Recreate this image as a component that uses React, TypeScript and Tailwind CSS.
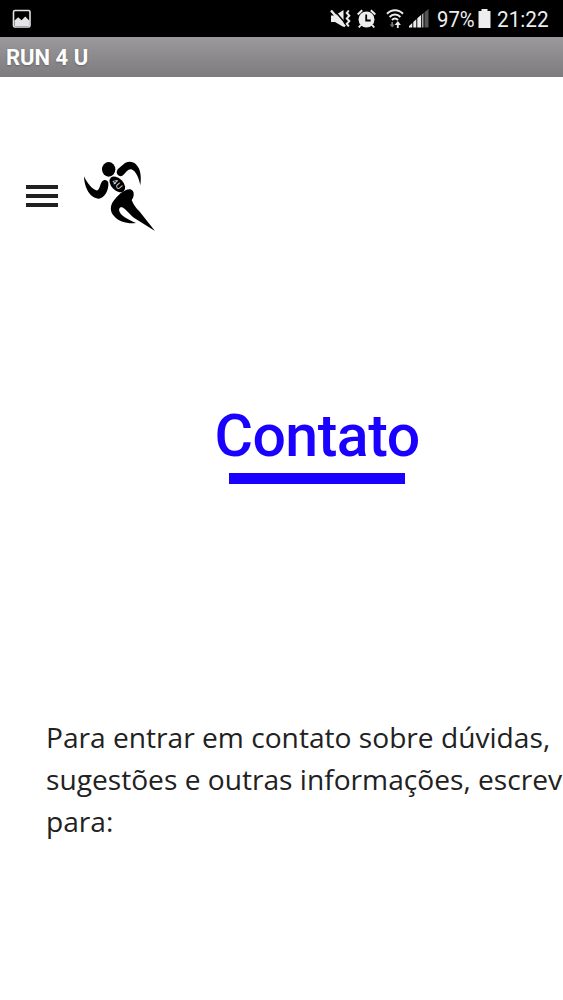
const StatusBar = () => {
  return (
    <div className="flex h-[37px] items-center bg-black pl-[12px] pt-[1px] text-[#ededf0]">
      <svg width="20" height="20" viewBox="0 0 20 20">
        <rect x="1.5" y="1.5" width="16.5" height="16.5" rx="1.5" fill="none" stroke="#e4e4e8" strokeWidth="1.6" />
        <path d="M2.5 17V11.5l3.7-3.2 3.4 2.9L13.2 7.500l4.300 4.200V17z" fill="#e4e4e8" />
      </svg>
      <div className="ml-[298px] flex items-center">
        <svg width="22" height="20" viewBox="0 0 22 20" fill="#ededf0">
          <path d="M1 6.500h4L13.500 1v17L5 13H1z" />
          <path d="M3.500.5L16 15" stroke="#000" strokeWidth="1.400" />
          <path d="M1 1.500L15 17.500" stroke="#ededf0" strokeWidth="2.400" />
          <path d="M18.800 1.500l-2 2.500 2.500 2.700-2.500 2.700 2.500 2.700-2.500 2.700 2 2.700" fill="none" stroke="#ededf0" strokeWidth="2" />
        </svg>
        <svg className="ml-[5px]" width="20" height="20" viewBox="0 0 20 20">
          <circle cx="9.500" cy="10.500" r="8" fill="#ededf0" />
          <path d="M.7 5.500L5.200 1.200M13.800 1.200L18.300 5.500" stroke="#ededf0" strokeWidth="2" />
          <path d="M3.800 16l-2 2.500M15.200 16l2 2.500" stroke="#ededf0" strokeWidth="2" />
          <path d="M9.200 5.500v6h4.500" fill="none" stroke="#000" strokeWidth="1.800" />
        </svg>
        <svg className="ml-[9px]" width="18" height="20" viewBox="0 0 18 20" fill="none">
          <path d="M1 4.700C5.500 0 12.500 0 17 4.700M3.600 8c3-3.200 7.800-3.200 10.800 0M6 11c1.800-1.800 4.200-1.800 6 0" stroke="#ededf0" strokeWidth="2" />
          <path d="M6.200 13v4" stroke="#777" strokeWidth="1.700" />
          <path d="M3.700 15.500h5l-2.500 3z" fill="#777" />
          <path d="M11.800 15v4" stroke="#ededf0" strokeWidth="1.800" />
          <path d="M8.700 16l3.100-4 3.100 4z" fill="#ededf0" />
        </svg>
        <svg className="ml-[5px]" width="20" height="20" viewBox="0 0 20 20" fill="#ededf0">
          <path d="M0 18.500v-1.500L3.300 14v4.500zM4.300 18.500v-5.500l3-2.700v8.200zM8.300 18.500V9.300L12 6v12.500z" />
          <path d="M12.800 18.500V5.500L14.500 4v14.500z" fill="#aaa" />
          <path d="M15.500 18.500V3.200L19.500 0v18.500z" fill="#555" />
        </svg>
        <span className="ml-[8px] w-[38px] origin-left scale-x-90 pt-[1px] font-[Roboto,sans-serif] text-[22.500px] leading-none">97%</span>
        <svg className="ml-[3px]" width="13" height="20" viewBox="0 0 13 20" fill="#ededf0">
          <path d="M3.500 0h6v2H12.500v17H.5V2h3z" />
        </svg>
        <span className="ml-[6px] origin-left scale-x-[0.920] pt-[1px] font-[Roboto,sans-serif] text-[22.500px] leading-none">21:22</span>
      </div>
    </div>
  );
};

const RunnerLogo = () => {
  return (
    <svg width="72" height="72" viewBox="12 15 216 216">
      <ellipse cx="86" cy="43" rx="20" ry="22" />
      <path d="M110 52C111 40 122 36 129 29C139 18 158 17 169 29C183 43 184 67 181 91C177 72 169 48 154 43C143 42 138 53 129 61C120 67 111 62 110 52Z" />
      <path d="M12 64C22 86 37 102 48 106C59 108 59 90 65 81C71 73 82 73 85 83C87 103 75 128 57 131C31 131 13 100 12 64Z" />
      <ellipse cx="112" cy="88" rx="28" ry="18" transform="rotate(46 112 88)" />
      <path d="M151 103C165 106 163 127 155 135C160 148 169 160 178 169L225 228L164 190C150 180 138 163 127 157C119 155 115 162 119 171C127 187 149 195 168 204C145 207 116 201 102 183C89 169 90 151 101 137C112 124 130 102 151 103Z" />
      <text
        x="112"
        y="96"
        fill="#fff"
        textAnchor="middle"
        transform="rotate(47 112 88)"
        className="font-['Liberation_Sans',sans-serif] text-[24px] tracking-[2px]"
      >
        4U
      </text>
    </svg>
  );
};

const Header = () => {
  return (
    <header className="flex items-center pl-[26px] pt-[83px]">
      <button aria-label="Menu" className="flex w-[32px] flex-col gap-[5px]">
        <span className="h-[4px] bg-[#212121]" />
        <span className="h-[4px] bg-[#212121]" />
        <span className="h-[4px] bg-[#212121]" />
      </button>
      <div className="ml-[26px]">
        <RunnerLogo />
      </div>
    </header>
  );
};

const App = () => {
  return (
    <div className="h-[1000px] w-full overflow-hidden bg-white">
      <StatusBar />
      <div className="flex h-[40px] items-center bg-linear-to-b from-[#9b999b] to-[#7d7b7d] pl-[6px] pt-[1px]">
        <h1 className="font-[Roboto,sans-serif] text-[22px] font-bold leading-none text-white [text-shadow:0_1px_2px_#666]">
          RUN 4 U
        </h1>
      </div>
      <Header />
      <div className="ml-[212px] mt-[169px] flex w-[210px] flex-col items-center">
        <h2 className="whitespace-nowrap font-[Roboto,sans-serif] text-[59px] font-medium leading-[70px] tracking-[-0.500px] text-[#1a00ff]">
          Contato
        </h2>
        <div className="mt-[2px] h-[11px] w-[176px] bg-[#1a00ff]" />
      </div>
      <p className="ml-[46px] mt-[232px] whitespace-nowrap font-['Open_Sans',sans-serif] text-[28.150px] leading-[42.150px] text-[#212121]">
        Para entrar em contato sobre dúvidas,
        <br />
        sugestões e outras informações, escrev
        <br />
        para:
      </p>
    </div>
  );
};

export default App;
